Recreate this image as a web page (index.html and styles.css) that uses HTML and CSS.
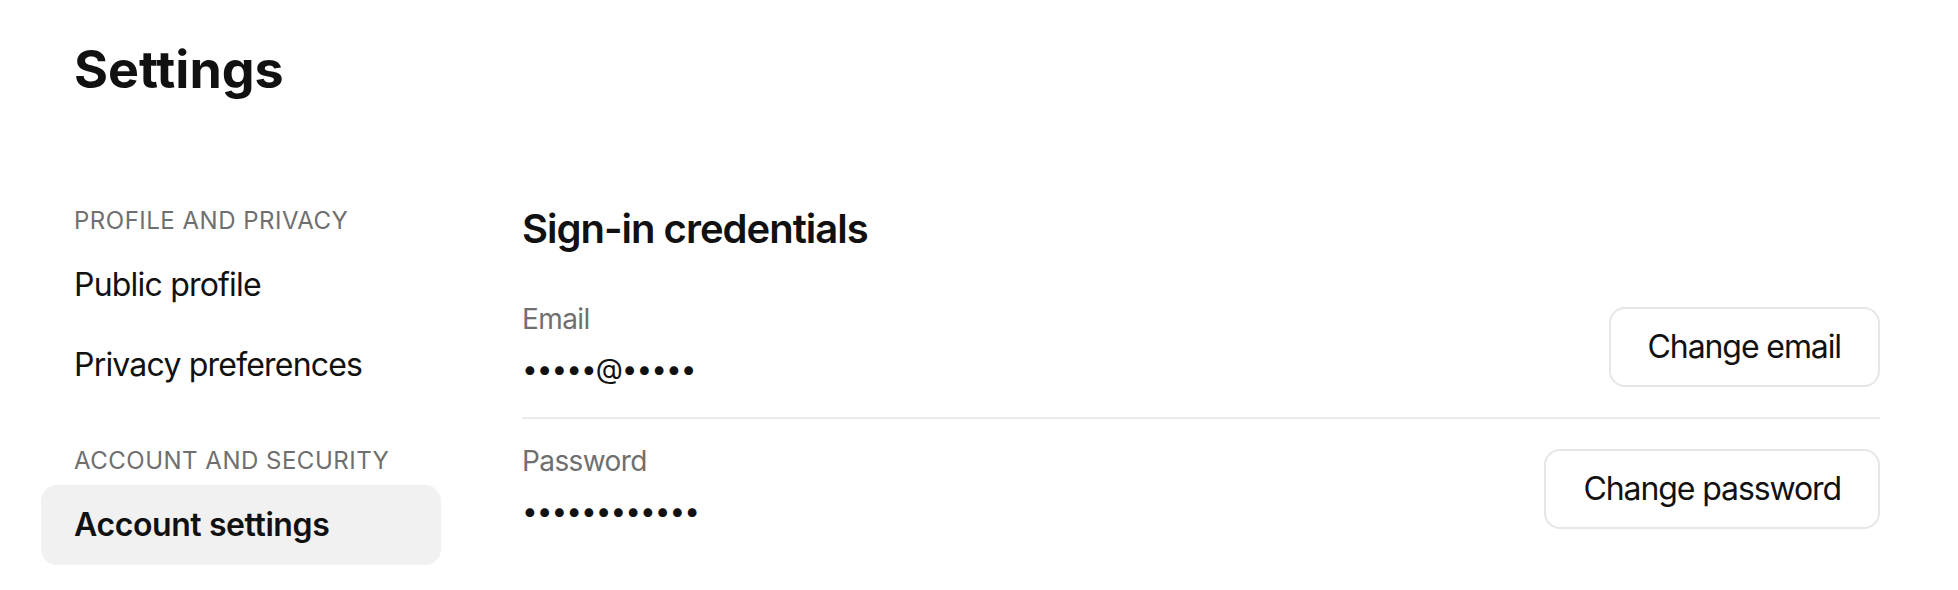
FILE: index.html
```html
<!DOCTYPE html>
<html lang="en">
<head>
    <meta charset="UTF-8">
    <meta name="viewport" content="width=device-width, initial-scale=1.0">
    <title>Settings</title>
    <link rel="stylesheet" href="styles.css">
</head>
<body>
    <div class="page">
        <h1 class="title">Settings</h1>
        <div class="layout">
            <nav class="sidebar">
                <div class="nav-group">Profile and privacy</div>
                <a class="nav-item" href="#">Public profile</a>
                <a class="nav-item" href="#">Privacy preferences</a>
                <div class="nav-group spaced">Account and security</div>
                <a class="nav-item active" href="#">Account settings</a>
            </nav>
            <main class="content">
                <h2 class="section-title">Sign-in credentials</h2>
                <div class="row">
                    <div class="field">
                        <div class="label">Email</div>
                        <div class="value">•••••@•••••</div>
                    </div>
                    <button class="btn">Change email</button>
                </div>
                <div class="row">
                    <div class="field">
                        <div class="label">Password</div>
                        <div class="value">••••••••••••</div>
                    </div>
                    <button class="btn">Change password</button>
                </div>
            </main>
        </div>
    </div>
</body>
</html>
```

FILE: styles.css
```css
body {
    margin: 0;
    font-family: 'Inter', 'Liberation Sans', sans-serif;
    background-color: #fff;
    color: #111;
}

.page {
    padding: 41px 78px 0 41px;
}

.title {
    margin: 0 0 106px 33px;
    font-size: 52px;
    line-height: 58px;
    font-weight: 700;
}

.layout {
    display: grid;
    grid-template-columns: 400px 1fr;
    gap: 81px;
}

.sidebar {
    display: flex;
    flex-direction: column;
}

.nav-group {
    padding-left: 33px;
    margin-bottom: 8px;
    font-size: 24px;
    line-height: 32px;
    letter-spacing: 0.5px;
    text-transform: uppercase;
    color: #6f6f6f;
}
.nav-group.spaced {
    margin-top: 40px;
}

.nav-item {
    padding-left: 33px;
    font-size: 32px;
    line-height: 80px;
    letter-spacing: -0.8px;
    color: #111;
    text-decoration: none;
    border-radius: 16px;
}
.nav-item.active {
    background-color: #f1f1f1;
    font-weight: 600;
    letter-spacing: -0.4px;
}

.section-title {
    margin: 0 0 24px;
    font-size: 40px;
    line-height: 48px;
    font-weight: 600;
    letter-spacing: -1px;
}

.row {
    display: flex;
    justify-content: space-between;
    align-items: center;
    padding: 24px 0;
}
.row + .row {
    border-top: 2px solid #ebebeb;
}

.label {
    font-size: 28px;
    line-height: 36px;
    letter-spacing: -0.6px;
    color: #6f6f6f;
}

.value {
    margin-top: 8px;
    font-size: 28px;
    line-height: 48px;
    letter-spacing: -1px;
}

.btn {
    padding: 18px 37px;
    font-family: inherit;
    font-size: 32px;
    line-height: 40px;
    letter-spacing: -1.1px;
    color: #111;
    background: #fff;
    border: 2px solid #e6e6e6;
    border-radius: 16px;
}
```
